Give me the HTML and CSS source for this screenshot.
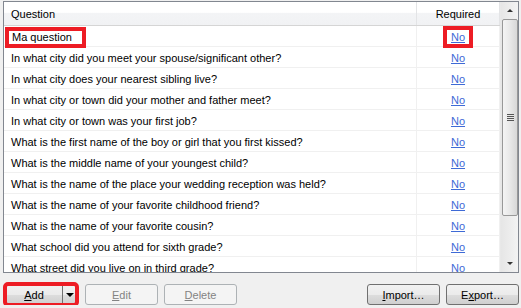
FILE: index.html
```html
<!DOCTYPE html>
<html lang="en">
<head>
    <meta charset="UTF-8">
    <title>Security Questions</title>
    <link rel="stylesheet" href="styles.css">
</head>
<body>

    <div class="grid">
        <div class="grid-body">
            <div class="row header">
                <div class="cell question">Question</div>
                <div class="cell required">Required</div>
            </div>
            <div class="row">
                <div class="cell question"><span class="editor">Ma question</span></div>
                <div class="cell required"><a href="#" class="marked">No</a></div>
            </div>
            <div class="row">
                <div class="cell question">In what city did you meet your spouse/significant other?</div>
                <div class="cell required"><a href="#">No</a></div>
            </div>
            <div class="row">
                <div class="cell question">In what city does your nearest sibling live?</div>
                <div class="cell required"><a href="#">No</a></div>
            </div>
            <div class="row">
                <div class="cell question">In what city or town did your mother and father meet?</div>
                <div class="cell required"><a href="#">No</a></div>
            </div>
            <div class="row">
                <div class="cell question">In what city or town was your first job?</div>
                <div class="cell required"><a href="#">No</a></div>
            </div>
            <div class="row">
                <div class="cell question">What is the first name of the boy or girl that you first kissed?</div>
                <div class="cell required"><a href="#">No</a></div>
            </div>
            <div class="row">
                <div class="cell question">What is the middle name of your youngest child?</div>
                <div class="cell required"><a href="#">No</a></div>
            </div>
            <div class="row">
                <div class="cell question">What is the name of the place your wedding reception was held?</div>
                <div class="cell required"><a href="#">No</a></div>
            </div>
            <div class="row">
                <div class="cell question">What is the name of your favorite childhood friend?</div>
                <div class="cell required"><a href="#">No</a></div>
            </div>
            <div class="row">
                <div class="cell question">What is the name of your favorite cousin?</div>
                <div class="cell required"><a href="#">No</a></div>
            </div>
            <div class="row">
                <div class="cell question">What school did you attend for sixth grade?</div>
                <div class="cell required"><a href="#">No</a></div>
            </div>
            <div class="row">
                <div class="cell question">What street did you live on in third grade?</div>
                <div class="cell required"><a href="#">No</a></div>
            </div>
        </div>

        <div class="scrollbar">
            <div class="arrow up"></div>
            <div class="thumb">
                <div class="grip"></div>
            </div>
            <div class="track"></div>
            <div class="arrow down"></div>
        </div>
    </div>

    <div class="toolbar">
        <div class="split">
            <button class="btn add"><u>A</u>dd</button>
            <button class="btn drop"><span class="caret"></span></button>
        </div>
        <button class="btn disabled"><u>E</u>dit</button>
        <button class="btn disabled"><u>D</u>elete</button>
        <div class="spacer"></div>
        <button class="btn"><u>I</u>mport…</button>
        <button class="btn">E<u>x</u>port…</button>
    </div>

</body>
</html>
```

FILE: styles.css
```css
body {
    font-family: "Liberation Sans", Arial, sans-serif;
    font-size: 11px;
    background-color: #f0f0f0;
    margin: 0;
    padding: 1px 2px 0 3px;
    color: #000;
}

.grid {
    display: flex;
    height: 270px;
    border: 1px solid #828790;
    background-color: #fff;
    overflow: hidden;
}

.grid-body {
    flex: 1;
    overflow: hidden;
}

.row {
    display: flex;
    height: 20px;
    border-bottom: 1px solid #f0f0f0;
    align-items: center;
}

.row.header {
    height: 23px;
    background: linear-gradient(#ffffff, #ffffff 45%, #f3f4f6 50%, #f1f2f4);
    border-bottom: 1px solid #d5d5d5;
}

.cell {
    height: 100%;
    display: flex;
    align-items: center;
    padding-top: 2px;
    box-sizing: border-box;
    white-space: nowrap;
}

.header .cell {
    padding-top: 0;
}

.question {
    width: 412px;
    padding-left: 7px;
}

.required {
    flex: 1;
    justify-content: center;
    border-left: 1px solid #f0f0f0;
    border-right: 1px solid #f0f0f0;
}

.header .required {
    border-left-color: #e3e4e6;
    border-right-color: #e3e4e6;
}

.editor {
    margin-left: -6px;
    padding: 0 10px 0 3px;
    height: 13px;
    line-height: 13px;
    border: 4px solid #ed1c24;
    background-color: #fff;
}

a {
    color: #3e6ad6;
    text-decoration: underline;
}

a.marked {
    padding: 1px 4px;
    border: 4px solid #ed1c24;
}

.scrollbar {
    width: 17px;
    display: flex;
    flex-direction: column;
    background: linear-gradient(90deg, #e6e6e6, #f3f3f3);
    border-left: 1px solid #e8e8e8;
}

.arrow {
    height: 17px;
    display: flex;
    align-items: center;
    justify-content: center;
}

.arrow::before {
    content: "";
    border-left: 3px solid transparent;
    border-right: 3px solid transparent;
}

.arrow.up::before {
    border-bottom: 3px solid #333;
}

.arrow.down::before {
    border-top: 3px solid #333;
}

.thumb {
    height: 197px;
    margin: 0 0 0 1px;
    border: 1px solid #989898;
    border-radius: 2px;
    background: linear-gradient(90deg, #f4f4f4, #e8e8e8 50%, #d8d8d8);
    display: flex;
    align-items: center;
    justify-content: center;
    box-sizing: border-box;
}

.grip {
    width: 7px;
    height: 7px;
    background: repeating-linear-gradient(#555 0 1px, #e8e8e8 1px 2px);
}

.track {
    flex: 1;
}

.toolbar {
    display: flex;
    gap: 6px;
    margin-top: 11px;
    padding-left: 2px;
}

.spacer {
    flex: 1;
}

.btn {
    font-family: inherit;
    font-size: 11px;
    height: 21px;
    width: 73px;
    padding: 0;
    border: 1px solid #707070;
    border-radius: 3px;
    background: linear-gradient(#f2f2f2, #ebebeb 50%, #dddddd 51%, #cfcfcf);
    color: #000;
}

.btn.disabled {
    border-color: #adb2b5;
    background: #f4f4f4;
    color: #838383;
}

.split {
    display: flex;
    height: 21px;
    box-sizing: border-box;
    margin-right: 2px;
    border: 1px solid #707070;
    border-radius: 3px;
    outline: 4px solid #ed1c24;
    outline-offset: -2px;
}

.split .btn {
    border: none;
    border-radius: 0;
    height: 19px;
}

.split .add {
    width: 57px;
    border-right: 1px solid #707070;
}

.split .drop {
    width: 13px;
    display: flex;
    align-items: center;
    justify-content: center;
}

.caret {
    border-left: 4px solid transparent;
    border-right: 4px solid transparent;
    border-top: 4px solid #000;
}
```
